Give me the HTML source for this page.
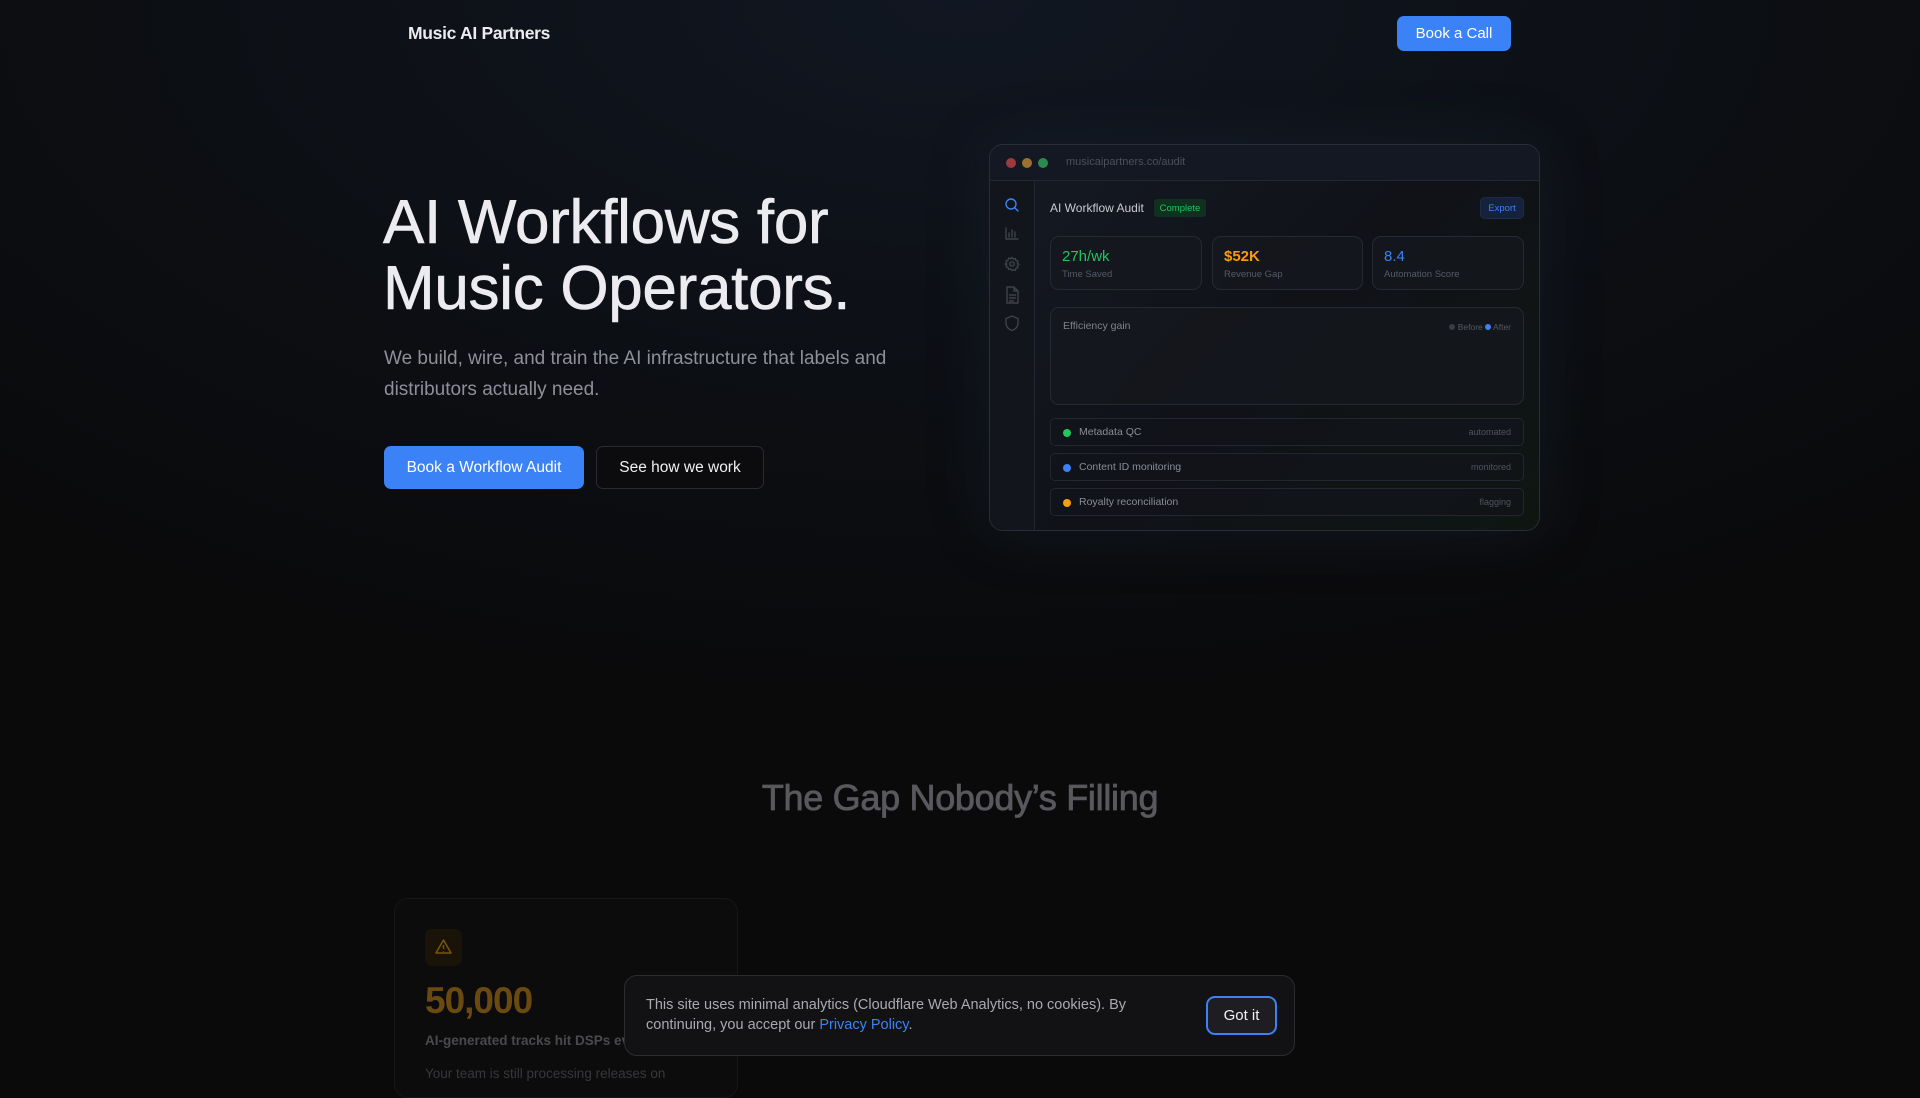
<!DOCTYPE html>
<html><head><meta charset="utf-8">
<style>
*{box-sizing:border-box;margin:0;padding:0}
body{width:1920px;height:1080px;overflow:hidden;background:#0a0a0b;font-family:"Liberation Sans",sans-serif;color:#e8e8ec;position:relative}
.bg{position:absolute;inset:0;background:radial-gradient(ellipse 1400px 700px at 960px 0px,#111722 0%,#0d1016 45%,#0a0a0b 100%)}
.abs{position:absolute}
.logo{left:408px;top:23px;font-size:17.5px;font-weight:bold;color:#ececf0;letter-spacing:-0.3px}
.call{left:1397px;top:16px;width:114px;height:35px;background:#3b82f6;border-radius:7px;color:#fff;font-size:15px;display:flex;align-items:center;justify-content:center}
h1{position:absolute;left:383px;top:190px;font-size:62px;line-height:66px;font-weight:normal;color:#ececf0;letter-spacing:-0.3px;-webkit-text-stroke:0.6px #ececf0}
.lead{left:384px;top:343px;width:540px;font-size:19px;line-height:31px;color:#8f8f99}
.b1{left:384px;top:446px;width:200px;height:43px;background:#3b82f6;border-radius:7px;color:#fff;font-size:15.5px;display:flex;align-items:center;justify-content:center}
.b2{left:596px;top:446px;width:168px;height:43px;border:1px solid #2a2a30;border-radius:7px;color:#f0f0f2;font-size:15.5px;display:flex;align-items:center;justify-content:center;background:#0c0c0e}
.panel{left:989px;top:144px;width:551px;height:387px;border:1px solid #2a2d35;border-radius:14px;background:linear-gradient(135deg,#151a24 0%,#101218 50%,#0f1612 100%);overflow:hidden;box-shadow:0 0 60px rgba(40,60,80,.25)}
.tb{position:absolute;left:0;top:0;right:0;height:36px;border-bottom:1px solid #242731;background:#141822}
.dot{position:absolute;top:13px;width:10px;height:10px;border-radius:50%}
.side{position:absolute;left:0;top:36px;bottom:0;width:45px;border-right:1px solid #242731;background:#12151c}
.card{position:absolute;border:1px solid #262932;border-radius:9px;background:rgba(22,24,30,.7)}
.sv{position:absolute;left:11px;top:11px;font-size:15px}
.sl{position:absolute;left:11px;top:32px;font-size:9.5px;color:#565a66}
.row{position:absolute;left:60px;width:474px;height:28px;border:1px solid #23262e;border-radius:5px;background:rgba(18,20,26,.6)}
.row i{position:absolute;left:12px;top:10px;width:8px;height:8px;border-radius:50%}
.row span{position:absolute;left:28px;top:7px;font-size:10.5px;color:#8a8d96}
.row b{position:absolute;right:12px;top:8px;font-size:9px;font-weight:normal;color:#50535c}
.gap{left:0;width:1920px;top:777px;text-align:center;font-size:36px;color:#58585d;letter-spacing:-0.3px;-webkit-text-stroke:0.8px #58585d}
.fc{left:394px;top:898px;width:344px;height:200px;border:1px solid #17171a;border-radius:14px;background:#0c0c0d}
.cookie{left:624px;top:975px;width:671px;height:81px;border:1px solid #2b2b30;border-radius:13px;background:#121214}
</style></head><body>
<div class="bg"></div>
<div class="abs logo">Music AI Partners</div>
<div class="abs call">Book a Call</div>
<h1>AI Workflows for<br>Music Operators.</h1>
<div class="abs lead">We build, wire, and train the AI infrastructure that labels and distributors actually need.</div>
<div class="abs b1">Book a Workflow Audit</div>
<div class="abs b2">See how we work</div>

<div class="abs panel">
 <div class="tb">
  <div class="dot" style="left:16px;background:#9b3a3f"></div>
  <div class="dot" style="left:32px;background:#9a7230"></div>
  <div class="dot" style="left:48px;background:#2a8a52"></div>
  <div style="position:absolute;left:76px;top:11px;font-size:11px;color:#4c505b">musicaipartners.co/audit</div>
 </div>
 <div class="side">
  <svg width="45" height="200" viewBox="0 0 45 200" fill="none" stroke-width="1.4" stroke-linecap="round" stroke-linejoin="round">
   <g stroke="#3b82f6"><circle cx="21" cy="23" r="5"/><path d="M25 27l3 3"/></g>
   <g stroke="#3e424c">
    <path d="M16 47v11h12M19 56v-4M22 56v-7M25 56v-5"/>
    <circle cx="22" cy="83" r="2.2"/><path d="M22 76.5l1.3 1.6 2-.6.6 2 2 .6-.6 2 1.6 1.3-1.6 1.3.6 2-2 .6-.6 2-2-.6L22 89.5l-1.3-1.6-2 .6-.6-2-2-.6.6-2L15.1 83l1.6-1.3-.6-2 2-.6.6-2 2 .6z"/>
    <path d="M17 106h7l4 4v12H17zM24 106v4h4M19.5 114h6M19.5 117h6M19.5 120h4"/>
    <path d="M22 135l6 2.5v4.5c0 4-3 6.5-6 7.5-3-1-6-3.5-6-7.5v-4.5z"/>
   </g>
  </svg>
 </div>
 <div style="position:absolute;left:60px;top:56px;font-size:12px;color:#c9cbd2">AI Workflow Audit</div>
 <div style="position:absolute;left:164px;top:54px;width:52px;height:18px;border-radius:3px;background:#12301f;color:#22c55e;font-size:9.5px;display:flex;align-items:center;justify-content:center">Complete</div>
 <div style="position:absolute;left:490px;top:52px;width:44px;height:22px;border-radius:5px;background:#15223c;border:1px solid #1d2c4a;color:#3b82f6;font-size:9.5px;display:flex;align-items:center;justify-content:center">Export</div>
 <div class="card" style="left:60px;top:91px;width:152px;height:54px"><div class="sv" style="color:#22c55e">27h/wk</div><div class="sl">Time Saved</div></div>
 <div class="card" style="left:222px;top:91px;width:151px;height:54px"><div class="sv" style="color:#f59e0b;font-weight:bold">$52K</div><div class="sl">Revenue Gap</div></div>
 <div class="card" style="left:382px;top:91px;width:152px;height:54px"><div class="sv" style="color:#3b82f6">8.4</div><div class="sl">Automation Score</div></div>
 <div class="card" style="left:60px;top:162px;width:474px;height:98px">
  <div style="position:absolute;left:12px;top:12px;font-size:10.5px;color:#80838c">Efficiency gain</div>
  <div style="position:absolute;right:12px;top:14px;font-size:8.5px;color:#555862"><span style="display:inline-block;width:6px;height:6px;border-radius:50%;background:#3a3d45"></span> Before <span style="display:inline-block;width:6px;height:6px;border-radius:50%;background:#3b82f6"></span> After</div>
 </div>
 <div class="row" style="top:273px"><i style="background:#22c55e"></i><span>Metadata QC</span><b>automated</b></div>
 <div class="row" style="top:308px"><i style="background:#3b82f6"></i><span>Content ID monitoring</span><b>monitored</b></div>
 <div class="row" style="top:343px"><i style="background:#f59e0b"></i><span>Royalty reconciliation</span><b>flagging</b></div>
</div>

<div class="abs gap">The Gap Nobody’s Filling</div>

<div class="abs fc">
 <div style="position:absolute;left:30px;top:30px;width:37px;height:37px;border-radius:7px;background:#1a1408">
  <svg width="37" height="37" viewBox="0 0 37 37" fill="none" stroke="#7a5514" stroke-width="1.5" stroke-linejoin="round"><path d="M18.5 11l7.5 13h-15z"/><path d="M18.5 16v4M18.5 22v.5"/></svg>
 </div>
 <div style="position:absolute;left:30px;top:81px;font-size:37px;font-weight:bold;color:#6b4a12;letter-spacing:-1px">50,000</div>
 <div style="position:absolute;left:30px;top:134px;font-size:13.5px;font-weight:bold;color:#4a4a4e">AI-generated tracks hit DSPs every day</div>
 <div style="position:absolute;left:30px;top:167px;font-size:13.5px;color:#38383c">Your team is still processing releases on</div>
</div>

<div class="abs cookie">
 <div style="position:absolute;left:21px;top:19px;width:520px;font-size:14.5px;line-height:20px;color:#a9a9b0">This site uses minimal analytics (Cloudflare Web Analytics, no cookies). By continuing, you accept our <span style="color:#3b82f6">Privacy Policy</span>.</div>
 <div style="position:absolute;left:581px;top:20px;width:71px;height:39px;border:2px solid #3b82f6;border-radius:9px;background:#1e1e22;color:#f2f2f4;font-size:15px;display:flex;align-items:center;justify-content:center">Got it</div>
</div>
</body></html>
